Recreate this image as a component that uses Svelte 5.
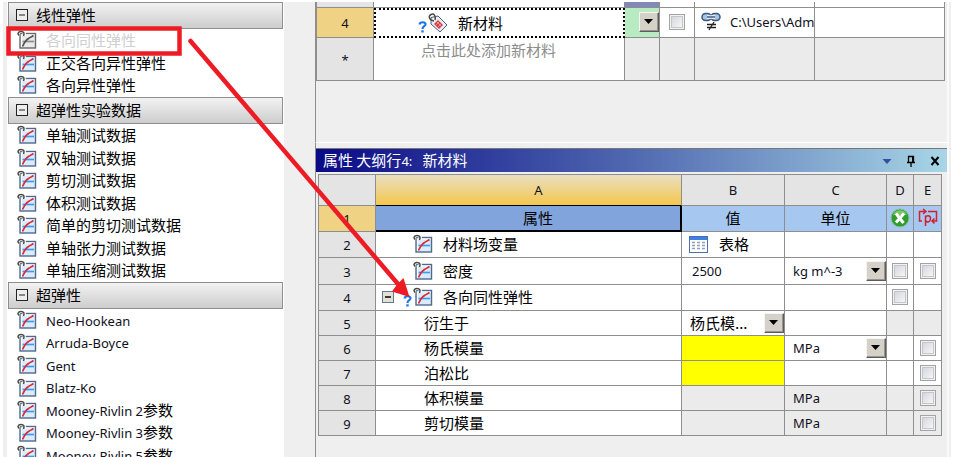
<script>
  const groups = [
    {
      title: "线性弹性",
      items: [
        { cn: "各向同性弹性", disabled: true },
        { cn: "正交各向异性弹性" },
        { cn: "各向异性弹性" },
      ],
    },
    {
      title: "超弹性实验数据",
      items: [
        { cn: "单轴测试数据" },
        { cn: "双轴测试数据" },
        { cn: "剪切测试数据" },
        { cn: "体积测试数据" },
        { cn: "简单的剪切测试数据" },
        { cn: "单轴张力测试数据" },
        { cn: "单轴压缩测试数据" },
      ],
    },
    {
      title: "超弹性",
      items: [
        { en: "Neo-Hookean" },
        { en: "Arruda-Boyce" },
        { en: "Gent" },
        { en: "Blatz-Ko" },
        { en: "Mooney-Rivlin 2", cn: "参数" },
        { en: "Mooney-Rivlin 3", cn: "参数" },
        { en: "Mooney-Rivlin 5", cn: "参数" },
      ],
    },
  ];

  let open = $state([true, true, true]);

  const rows = [
    { n: 2, name: "材料场变量", icon: true, table: "表格" },
    { n: 3, name: "密度", icon: true, value: "2500", unit: "kg m^-3", pick: true, d: true, e: true },
    { n: 4, name: "各向同性弹性", icon: true, parent: true, d: true },
    { n: 5, name: "衍生于", choice: "杨氏模...", off: ["d", "e"] },
    { n: 6, name: "杨氏模量", missing: true, unit: "MPa", pick: true, e: true },
    { n: 7, name: "泊松比", missing: true, e: true },
    { n: 8, name: "体积模量", unit: "MPa", e: true, off: ["b", "c", "d", "e"] },
    { n: 9, name: "剪切模量", unit: "MPa", e: true, off: ["b", "c", "d", "e"] },
  ];

  function isOff(row, col) {
    return row.off ? row.off.includes(col) : false;
  }
</script>

{#snippet chart(gray)}
  <svg class="chart" class:gray width="20" height="20" viewBox="0 0 20 20" aria-hidden="true">
    <rect x="3" y="3.500" width="15.500" height="14.500" fill="#dcebfb" stroke="#4f6a8e" stroke-width="1.400" />
    <path d="M4.500 17V5H17.500" fill="none" stroke="#fff" />
    <path d="M5.500 11.500H17" stroke="#3b9cf5" stroke-width="1.700" />
    <path d="M5.500 16.500C7.500 12 9 10 11.500 8.500S15 6.500 16.500 5.500" fill="none" stroke="#dc2a30" stroke-width="1.700" />
    <path d="M2.500 6C0 4 1 1.500 4 1.500S8 3 7 6" fill="none" stroke="#fff" stroke-width="3" />
    <path d="M2.500 5.500C0 4 1 1.500 4 1.500S7.500 3 6.500 6" fill="none" stroke="#4a473e" stroke-width="1.500" />
  </svg>
{/snippet}

{#snippet arrow()}
  <span class="arrow" aria-hidden="true">
    <svg width="10" height="6" viewBox="0 0 10 6"><path d="M0 0H9L4.500 5Z" /></svg>
  </span>
{/snippet}

{#snippet query()}
  <svg class="query" width="10" height="12" viewBox="0 0 10 12" aria-hidden="true">
    <path d="M1.500 3.500C2 0.500 8 0.500 7.500 3.500C7.300 5.500 4.500 5 4.500 8" fill="none" stroke="#1777ea" stroke-width="2.200" />
    <path d="M3.300 9.300H5.700V11.500H3.300Z" fill="#1777ea" />
  </svg>
{/snippet}

<div class="page">
  <nav class="toolbox">
    {#each groups as group, i}
      <button class="group" aria-expanded={open[i]} onclick={() => (open[i] = !open[i])}>
        <svg width="12" height="12" viewBox="0 0 12 12" aria-hidden="true">
          <rect x="0.5" y="0.5" width="11" height="11" fill="#eee" stroke="#222" />
          <path d={open[i] ? "M3 6H9" : "M3 6H9M6 3V9"} stroke="#222" />
        </svg>
        {group.title}
      </button>
      {#if open[i]}
        <ul>
          {#each group.items as item}
            <li>
              <button class="item" disabled={item.disabled}>
                {@render chart(item.disabled)}
                <span>{#if item.en}<span class="latin">{item.en}</span>{/if}{item.cn ?? ""}</span>
              </button>
            </li>
          {/each}
        </ul>
      {/if}
    {/each}
  </nav>

  <main>
    <section class="outline">
      <table>
        <colgroup>
          <col class="num" /><col /><col class="w35" /><col class="w35" /><col class="w120" /><col class="w130" />
        </colgroup>
        <tbody>
          <tr class="cut">
            <th></th>
            <td></td>
            <td class="violet"></td>
            <td></td>
            <td></td>
            <td></td>
          </tr>
          <tr class="current">
            <th class="picked">4</th>
            <td class="focus">
              <div class="name material">
                {@render query()}
                <svg width="20" height="20" viewBox="0 0 20 20" aria-hidden="true">
                  <path d="M3 4.500L10 3l9 9-7 7-9-8Z" fill="#e8eef4" stroke="#4c5f78" />
                  <path d="M10 7l5 5-4 4-5-5Z" fill="#d93b40" />
                  <path d="M8.500 8.500l5 5M11.500 8.500l-4 4M13.500 10.500l-4 4" stroke="#f5b0b0" stroke-width="0.7" />
                  <path d="M6 8C1 7 0 3 3 1.500S8 3 7 7" fill="none" stroke="#4e4a44" stroke-width="1.5" />
                </svg>
                <span>新材料</span>
              </div>
            </td>
            <td class="green">
              <button class="plain" aria-label="内容">{@render arrow()}</button>
            </td>
            <td class="tick"><input type="checkbox" aria-label="4" /></td>
            <td>
              <div class="source">
                <svg width="20" height="20" viewBox="0 0 20 20" aria-hidden="true">
                  <g fill="none" stroke="#39587f" stroke-width="1.500">
                    <rect x="1" y="1.500" width="9" height="7" rx="3.500" fill="#a9c3e2" />
                    <rect x="10" y="1.500" width="9" height="7" rx="3.500" fill="#a9c3e2" />
                    <path d="M6 5H14" stroke="#fff" stroke-width="3.500" />
                    <path d="M6 5H14" />
                  </g>
                  <path d="M6 12.500H15M6 15.500H15M13 10l-5 8" stroke="#222" stroke-width="1.300" />
                </svg>
                <span class="latin">C:\Users\Adm</span>
              </div>
            </td>
            <td></td>
          </tr>
          <tr class="add">
            <th>*</th>
            <td><div class="hint">点击此处添加新材料</div></td>
            <td class="off"></td>
            <td class="off"></td>
            <td class="off"></td>
            <td class="off"></td>
          </tr>
        </tbody>
      </table>
    </section>

    <section class="properties">
      <header>
        <h2>属性 大纲行<span class="latin">4:</span>&nbsp;&nbsp; 新材料</h2>
        <button aria-label="菜单">
          <svg width="10" height="12" viewBox="0 0 10 12"><path d="M0.500 4H9.500L5 9Z" fill="#34509c" /></svg>
        </button>
        <button aria-label="固定">
          <svg width="10" height="12" viewBox="0 0 10 12">
            <path d="M2.500 7V1.500H7.500V7M1 7.500H9M5 8V12" fill="none" stroke="#000" stroke-width="1.300" />
            <path d="M7 1V7" stroke="#000" stroke-width="2" />
          </svg>
        </button>
        <button aria-label="关闭">
          <svg width="10" height="12" viewBox="0 0 10 12">
            <path d="M1.500 2L8.500 10M8.500 2L1.500 10" stroke="#000" stroke-width="2" />
          </svg>
        </button>
      </header>
      <table>
        <colgroup>
          <col class="num" /><col /><col class="w103" /><col class="w102" /><col class="w27" /><col class="w28" />
        </colgroup>
        <thead>
          <tr class="letters">
            <th></th>
            <th class="sorted">A</th>
            <th>B</th>
            <th>C</th>
            <th>D</th>
            <th>E</th>
          </tr>
          <tr class="titles">
            <th class="picked">1</th>
            <td class="selected">属性</td>
            <td>值</td>
            <td>单位</td>
            <td>
              <svg width="20" height="20" viewBox="0 0 20 20" role="img" aria-label="抑制">
                <circle cx="10" cy="10" r="9" fill="#2f9d2d" stroke="#8fbf9b" />
                <path d="M3 7a7.500 7.500 0 0 1 14 0Z" fill="#7cc66c" />
                <path d="M6 5.500L13.500 15M14 5.500L6 14.500" stroke="#fff" stroke-width="3" />
              </svg>
            </td>
            <td>
              <svg width="20" height="20" viewBox="0 0 20 20" role="img" aria-label="参数化">
                <g fill="none" stroke="#d3222e" stroke-width="1.500">
                  <path d="M4 13H1.500V3.500H7M5 1l3 2.500L5 6M10 3.500H18.500V13H14M16.500 10.500L14 13l2.500 2.500" />
                  <path d="M7.500 18V7.500M7.500 10C8 6.500 13 7 12.500 11S8 14.500 7.500 12" />
                </g>
              </svg>
            </td>
          </tr>
        </thead>
        <tbody>
          {#each rows as row}
            <tr class:tall={row.n === 3} class:mid={row.n === 2 || row.n === 4}>
              <th>{row.n}</th>
              <td>
                <div class="name" class:child={!row.icon} class:parent={row.parent}>
                  {#if row.parent}
                    <button class="fold" aria-label="折叠">
                      <svg width="12" height="12" viewBox="0 0 12 12">
                        <rect x="0.5" y="0.5" width="11" height="11" fill="#e2e0d5" stroke="#61798f" />
                        <path d="M3 6H9" stroke="#000" stroke-width="1.500" />
                      </svg>
                    </button>
                    {@render query()}
                  {/if}
                  {#if row.icon}{@render chart(false)}{/if}
                  <span>{row.name}</span>
                </div>
              </td>
              <td class:off={isOff(row, "b")} class:missing={row.missing}>
                {#if row.table}
                  <div class="grid-link">
                    <svg width="19" height="17" viewBox="0 0 19 17" aria-hidden="true">
                      <rect x="0.5" y="0.5" width="18" height="16" fill="#fff" stroke="#4c6fae" />
                      <path d="M1 1H18V4H1Z" fill="#3f80e4" />
                      <path d="M3 6.500H6M8 6.500H11M13 6.500H16M3 9.500H6M8 9.500H11M13 9.500H16M3 12.500H6M8 12.500H11M13 12.500H16" stroke="#8f9fb8" stroke-width="1.500" />
                    </svg>
                    <span>{row.table}</span>
                  </div>
                {:else if row.choice}
                  <div class="drop">
                    <select aria-label={row.name}><option>{row.choice}</option></select>
                    {@render arrow()}
                  </div>
                {:else if row.value || row.missing}
                  <input class="value latin" type="text" aria-label={row.name} value={row.value ?? ""} />
                {/if}
              </td>
              <td class:off={isOff(row, "c")}>
                {#if row.pick}
                  <div class="drop">
                    <select class="latin" aria-label="{row.name} 单位"><option>{row.unit}</option></select>
                    {@render arrow()}
                  </div>
                {:else if row.unit}
                  <div class="unit latin">{row.unit}</div>
                {/if}
              </td>
              <td class="tick" class:off={isOff(row, "d")}>
                {#if row.d}<input type="checkbox" aria-label="{row.name} D" />{/if}
              </td>
              <td class="tick" class:off={isOff(row, "e")}>
                {#if row.e}<input type="checkbox" aria-label="{row.name} E" />{/if}
              </td>
            </tr>
          {/each}
        </tbody>
      </table>
    </section>
  </main>

  <svg class="callout" width="420" height="310" viewBox="0 0 420 310" aria-hidden="true">
    <rect x="8.500" y="28.500" width="171" height="25" fill="none" stroke="#ed1c24" stroke-width="4.500" />
    <path d="M190.500 41L398 284" stroke="#ed1c24" stroke-width="4.500" stroke-linecap="round" />
    <path d="M409.500 297L392 291.500L397 284.500L403.500 278Z" fill="#ed1c24" />
  </svg>
</div>

<style>
  :global(body) {
    background: #fff;
  }
  .page {
    position: relative;
    display: flex;
    box-sizing: border-box;
    height: 100vh;
    padding: 2px 5px 0 3px;
    overflow: hidden;
    color: #000;
    font: 15px/20px "Noto Sans CJK SC", sans-serif;
  }
  .latin,
  th {
    font-family: "Noto Sans", "Noto Sans CJK SC", sans-serif;
    font-size: 13px;
    font-weight: 400;
    color: #10101c;
  }
  button,
  input,
  select {
    margin: 0;
    padding: 0;
    border: 0;
    border-radius: 0;
    background: none;
    color: inherit;
    font: inherit;
  }
  svg {
    display: block;
    flex: none;
  }

  .toolbox {
    flex: 0 0 277px;
    border-left: 4px solid #efefef;
    background: #fff;
  }
  .group {
    display: flex;
    align-items: center;
    gap: 8px;
    box-sizing: border-box;
    width: calc(100% - 2px);
    height: 27px;
    margin-left: 1px;
    padding: 0 0 2px 7px;
    border: 1px solid #8e8e8e;
    background: linear-gradient(#f2f2f2, #cdcdcd);
  }
  ul {
    margin: 0;
    padding: 0 0 1px;
    list-style: none;
  }
  li {
    height: 22px;
  }
  li:nth-child(even) {
    height: 23px;
  }
  .item {
    display: flex;
    align-items: center;
    gap: 9px;
    width: 100%;
    height: 100%;
    padding-left: 10px;
    text-align: left;
    white-space: nowrap;
  }
  .item:disabled {
    color: #cfcfcf;
  }
  .gray {
    filter: grayscale(1);
  }

  main {
    flex: 1;
    min-width: 0;
    margin-left: 25px;
    padding-left: 6px;
    border-right: 2px solid #efefef;
    background: #efefef;
    box-shadow: -25px 0 #efefef;
  }
  section {
    border-left: 1px solid #8e8e8e;
    border-right: 2px solid #fafafa;
  }
  .outline {
    height: 140px;
    padding-right: 2px;
    border-bottom: 1px solid #fff;
  }
  .properties {
    box-sizing: border-box;
    height: 100%;
    padding-top: 5px;
  }
  table {
    width: 100%;
    table-layout: fixed;
    border-collapse: separate;
    border-spacing: 0;
    border-left: 1px solid #8e8e8e;
  }
  .num {
    width: 57px;
  }
  .w35 {
    width: 35px;
  }
  .w120 {
    width: 120px;
  }
  .w130 {
    width: 130px;
  }
  .w103 {
    width: 103px;
  }
  .w102 {
    width: 102px;
  }
  .w27 {
    width: 27px;
  }
  .w28 {
    width: 28px;
  }
  th,
  td {
    box-sizing: border-box;
    padding: 0;
    border-right: 1px solid #8e8e8e;
    border-bottom: 1px solid #8e8e8e;
    background: #fff;
    line-height: 20px;
    overflow: hidden;
    white-space: nowrap;
  }
  th {
    background: #e4e4e4;
  }
  td {
    padding-bottom: 1px;
  }
  tbody th {
    padding-top: 1px;
  }
  .off {
    background: #ebebeb;
  }
  .picked {
    background: #efd283;
  }
  .cut {
    height: 6px;
    line-height: 0;
  }
  .violet {
    background: #8289b8;
  }
  .current {
    height: 30px;
  }
  .add {
    height: 43px;
  }
  .focus {
    border: 2px dotted #000;
  }
  .green {
    background: #b9ebc3;
  }
  .plain {
    display: block;
    margin-left: auto;
  }
  .name {
    display: flex;
    align-items: center;
    gap: 10px;
    padding-left: 37px;
  }
  .name.child {
    padding-left: 48px;
  }
  .name.parent {
    padding-left: 6px;
  }
  .name.material {
    padding-left: 42px;
  }
  .query {
    align-self: flex-end;
    margin-right: -10px;
  }
  .parent .query {
    margin-left: -1px;
  }
  .hint {
    height: 38px;
    padding-left: 47px;
    color: #8c8c8c;
  }
  .source {
    display: flex;
    align-items: center;
    gap: 9px;
    padding-left: 6px;
  }
  .tick {
    text-align: center;
  }
  input[type="checkbox"] {
    display: block;
    width: 16px;
    height: 16px;
    margin: 0 auto;
    appearance: none;
    border: 1px solid #a3a3a3;
    box-shadow: inset 0 0 0 1px #f2f2f2, inset 0 0 0 2px #c4c6ca;
    background: linear-gradient(135deg, #cdd1d9, #fcfcfc);
  }
  .arrow {
    display: flex;
    align-items: center;
    justify-content: center;
    flex: none;
    box-sizing: border-box;
    width: 20px;
    height: 20px;
    border: 1px solid;
    border-color: #f6f5f2 #5c5c5c #5c5c5c #f6f5f2;
    box-shadow: inset -1px -1px #98958e;
    background: #d5d1c8;
    pointer-events: none;
  }

  header {
    display: flex;
    align-items: center;
    gap: 14px;
    box-sizing: border-box;
    height: 24px;
    margin-bottom: 2px;
    padding: 0 7px;
    border-top: 1px solid #777;
    background: linear-gradient(90deg, #0a0a86, #5068b0 50%, #a8d6e6);
  }
  h2 {
    flex: 1;
    margin: 0;
    color: #fff;
    font: inherit;
  }
  h2 .latin {
    color: #fff;
  }
  .properties table {
    width: calc(100% - 7px);
    margin-left: 2px;
    border-top: 1px solid #8e8e8e;
  }
  .properties tr {
    height: 25px;
  }
  .properties .letters {
    height: 31px;
  }
  .properties .titles,
  .properties .mid {
    height: 26px;
  }
  .properties .tall {
    height: 27px;
  }
  .letters .sorted {
    padding-left: 20px;
    background: linear-gradient(#e9dfc2, #f4c64c);
    border-bottom-color: #000;
  }
  .titles td {
    background: #a6c7f0;
    text-align: center;
  }
  .titles .selected {
    padding-left: 20px;
    background: #82a4dc;
    border-right: 2px solid #000;
    border-bottom: 2px solid #000;
  }
  .titles svg {
    margin: 0 auto;
  }
  td.missing {
    background: #ff0;
  }
  .value {
    display: block;
    box-sizing: border-box;
    width: 100%;
    padding: 0 10px;
  }
  .unit {
    padding-left: 8px;
  }
  .drop {
    display: flex;
    align-items: center;
  }
  .drop select {
    flex: 1;
    min-width: 0;
    height: 20px;
    margin-right: -20px;
    padding: 0 20px 0 8px;
    appearance: none;
  }
  .grid-link {
    display: flex;
    align-items: center;
    gap: 11px;
    padding-left: 7px;
  }

  .callout {
    position: absolute;
    top: 0;
    left: 0;
    pointer-events: none;
  }
</style>
